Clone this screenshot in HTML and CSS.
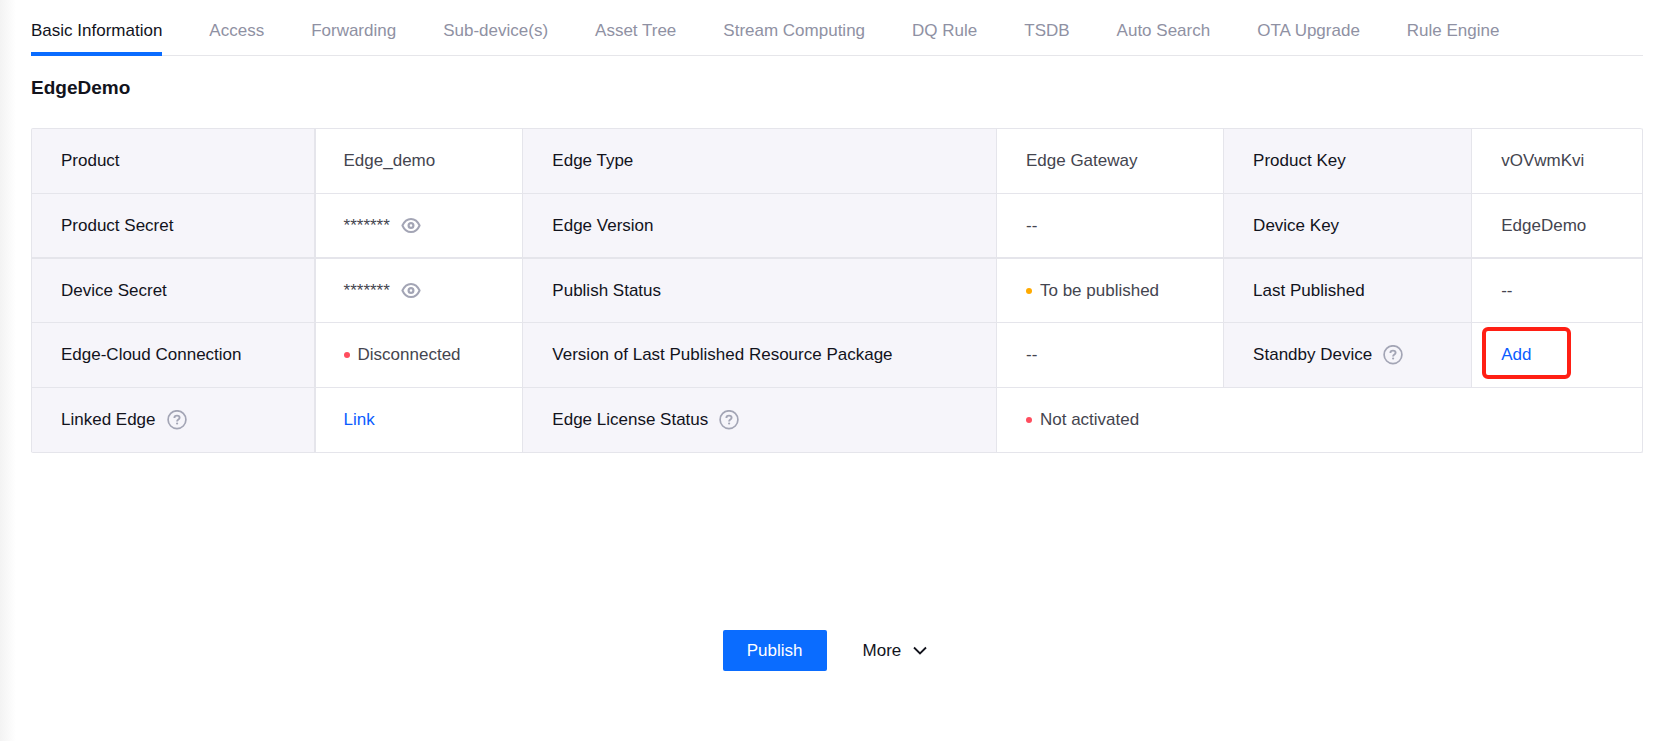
FILE: index.html
```html
<!DOCTYPE html>
<html lang="en">
<head>
<meta charset="utf-8">
<title>EdgeDemo</title>
<link rel="stylesheet" href="styles.css">
</head>
<body>
<svg class="sprite" aria-hidden="true">
  <symbol id="eye" viewBox="0 0 20 20">
    <path d="M1.400 9.500C3.400 5 6.600 2.900 10 2.900s6.600 2.100 8.600 6.600c-2 4.500-5.200 6.600-8.600 6.600S3.400 14 1.400 9.500z" fill="none" stroke="currentColor" stroke-width="2" stroke-linejoin="round"/>
    <circle cx="10" cy="9.500" r="2.400" fill="none" stroke="currentColor" stroke-width="2.200"/>
  </symbol>
  <symbol id="help" viewBox="0 0 20 20">
    <circle cx="10" cy="9.700" r="8.900" fill="none" stroke="currentColor" stroke-width="1.700"/>
    <path d="M7.400 7.900c0-1.500 1-2.300 2.600-2.300s2.600.8 2.600 2.100c0 1.800-2.500 1.700-2.500 3.700" fill="none" stroke="currentColor" stroke-width="1.900"/>
    <circle cx="10.100" cy="13.500" r="1.100" fill="currentColor"/>
  </symbol>
</svg>
<main class="page">
  <nav class="tabs">
    <a class="tab active" href="#" aria-current="page">Basic Information</a>
    <a class="tab" href="#">Access</a>
    <a class="tab" href="#">Forwarding</a>
    <a class="tab" href="#">Sub-device(s)</a>
    <a class="tab" href="#">Asset Tree</a>
    <a class="tab" href="#">Stream Computing</a>
    <a class="tab" href="#">DQ Rule</a>
    <a class="tab" href="#">TSDB</a>
    <a class="tab" href="#">Auto Search</a>
    <a class="tab" href="#">OTA Upgrade</a>
    <a class="tab" href="#">Rule Engine</a>
  </nav>
  <h1 class="title">EdgeDemo</h1>
  <table class="info">
    <colgroup>
      <col class="col-a"><col class="col-b"><col class="col-c"><col class="col-d"><col class="col-e"><col>
    </colgroup>
    <tbody>
      <tr>
        <th scope="row">Product</th><td>Edge_demo</td>
        <th scope="row">Edge Type</th><td>Edge Gateway</td>
        <th scope="row">Product Key</th><td>vOVwmKvi</td>
      </tr>
      <tr class="short">
        <th scope="row">Product Secret</th>
        <td><div class="line">*******<button class="icon-button" type="button" aria-label="Show product secret"><svg class="icon"><use href="#eye"/></svg></button></div></td>
        <th scope="row">Edge Version</th><td>--</td>
        <th scope="row">Device Key</th><td>EdgeDemo</td>
      </tr>
      <tr class="divided">
        <th scope="row">Device Secret</th>
        <td><div class="line">*******<button class="icon-button" type="button" aria-label="Show device secret"><svg class="icon"><use href="#eye"/></svg></button></div></td>
        <th scope="row">Publish Status</th><td><div class="status pending">To be published</div></td>
        <th scope="row">Last Published</th><td>--</td>
      </tr>
      <tr>
        <th scope="row">Edge-Cloud Connection</th><td><div class="status error">Disconnected</div></td>
        <th scope="row">Version of Last Published Resource Package</th><td>--</td>
        <th scope="row"><div class="line">Standby Device<svg class="icon"><use href="#help"/></svg></div></th>
        <td class="marked"><a class="link" href="#">Add</a></td>
      </tr>
      <tr>
        <th scope="row"><div class="line">Linked Edge<svg class="icon"><use href="#help"/></svg></div></th>
        <td><a class="link" href="#">Link</a></td>
        <th scope="row"><div class="line">Edge License Status<svg class="icon"><use href="#help"/></svg></div></th>
        <td colspan="3"><div class="status error">Not activated</div></td>
      </tr>
    </tbody>
  </table>
  <div class="actions">
    <button class="button primary" type="button">Publish</button>
    <button class="button plain" type="button">More
      <svg class="chevron" viewBox="0 0 14 10"><path d="M1 1.500l6 6 6-6" fill="none" stroke="currentColor" stroke-width="1.800"/></svg>
    </button>
  </div>
</main>
</body>
</html>
```
FILE: styles.css
```css
*,
*::before,
*::after {
  box-sizing: border-box;
}

body {
  margin: 0;
  min-height: 100vh;
  background: #fff linear-gradient(to right, #f3f3f3, #fff) no-repeat left / 16px 100%;
  color: #12131c;
  font-family: "Liberation Sans", Arial, sans-serif;
  font-size: 17px;
  line-height: 24px;
}

.sprite {
  display: none;
}

.page {
  padding: 0 33px 32px 31px;
}

.tabs {
  display: flex;
  gap: 47px;
  border-bottom: 1px solid #e6e6ea;
}

.tab {
  margin-bottom: -1px;
  padding: 19px 0 9px;
  border-bottom: 4px solid transparent;
  color: #8f91a3;
  text-decoration: none;
  white-space: nowrap;
}

.tab.active {
  border-bottom-color: #0a6cff;
  color: #12131c;
}

.title {
  margin: 20px 0 28px;
  font-size: 19px;
  line-height: 24px;
}

.info {
  width: 100%;
  table-layout: fixed;
  border: 1px solid #e5e5eb;
  border-width: 0 1px 1px 0;
  border-radius: 2px;
  border-spacing: 0;
}

.col-a { width: 17.6%; }
.col-b { width: 12.9%; }
.col-c { width: 29.4%; }
.col-d { width: 14.1%; }
.col-e { width: 15.4%; }

.info th,
.info td {
  height: 65px;
  padding: 0 28px 0 29px;
  border: 0 solid #e5e5eb;
  border-width: 1px 0 0 1px;
  font-weight: 400;
  text-align: left;
  vertical-align: middle;
}

.info th {
  background: #f6f5fa;
}

.info td {
  color: #44454f;
}

.info th:first-child {
  border-right-width: 1px;
}

.info th + td:nth-child(2) {
  padding-left: 28px;
}

.info .short > * {
  height: 64px;
}

.info .divided > * {
  border-top-width: 2px;
}

.info tr:first-child th:first-child {
  border-top-left-radius: 2px;
}

.info tr:first-child td:last-child {
  border-top-right-radius: 2px;
}

.line {
  display: flex;
  align-items: center;
  gap: 11px;
}

.icon-button {
  display: flex;
  padding: 0;
  border: 0;
  background: none;
}

.icon {
  width: 20px;
  height: 20px;
  color: #a3a5b5;
}

.status {
  display: flex;
  align-items: center;
  gap: 8px;
}

.status::before {
  content: "";
  width: 6px;
  height: 6px;
  border-radius: 50%;
  background: #ff4d5e;
}

.status.pending::before {
  background: #ffaa00;
}

.link {
  color: #0a5cff;
  text-decoration: none;
}

.marked {
  position: relative;
}

.marked::after {
  content: "";
  position: absolute;
  top: 4px;
  left: 10px;
  width: 89px;
  height: 52px;
  border: 4px solid #ff1f14;
  border-radius: 6px;
  pointer-events: none;
}

.actions {
  display: flex;
  justify-content: center;
  gap: 12px;
  margin-top: 177px;
}

.button {
  display: flex;
  align-items: center;
  gap: 12px;
  padding: 9px 24px 8px;
  border: 0;
  border-radius: 2px;
  font: inherit;
}

.primary {
  background: #0a6cff;
  color: #fff;
}

.plain {
  background: none;
  color: #12131c;
}

.chevron {
  width: 14px;
  height: 10px;
}
```
